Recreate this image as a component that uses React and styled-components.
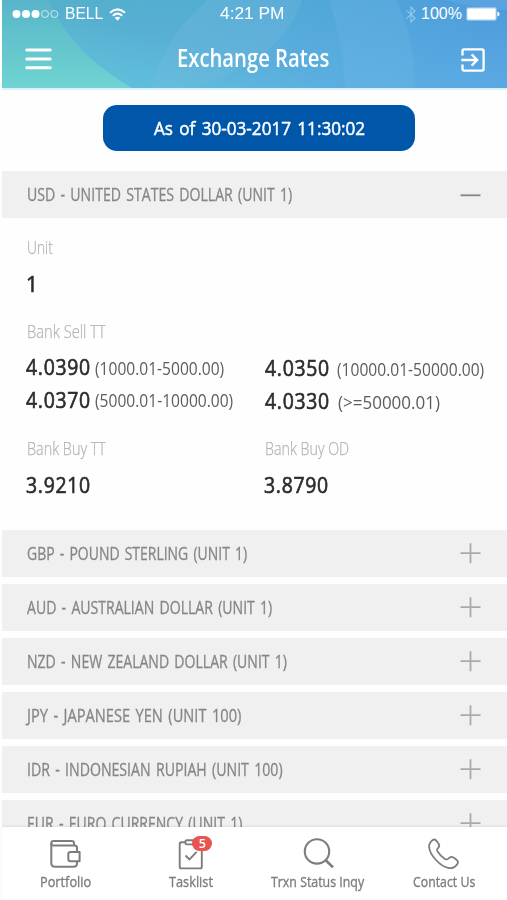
import React, { useLayoutEffect, useRef, useState } from "react";
import styled, { createGlobalStyle } from "styled-components";

const GlobalStyle = createGlobalStyle`
  * {
    box-sizing: border-box;
  }

  body {
    margin: 0;
    background: #ffffff;
    font-family: "Open Sans", "Noto Sans", sans-serif;
  }
`;

const Screen = styled.div`
  width: 507px;
  height: 900px;
  padding-left: 2px;
  display: flex;
  flex-direction: column;
  overflow: hidden;
  background: #fefefe;
`;

const Header = styled.header`
  position: relative;
  flex: none;
  height: 90px;
  color: #ffffff;
  border-bottom: 2px solid #d9f1fb;
`;

const HeaderArt = styled.svg`
  position: absolute;
  top: 0;
  left: 0;
  width: 100%;
  height: 88px;
`;

const StatusBar = styled.div`
  position: relative;
  height: 28px;
  padding: 0 7px 0 10px;
  display: grid;
  grid-template-columns: 208px 1fr auto;
  align-items: center;
  font-family: "Liberation Sans", Arial, sans-serif;
  font-size: 16px;
  line-height: 28px;
`;

const StatusGroup = styled.div`
  display: flex;
  align-items: center;
  gap: ${(props) => props.$gap}px;
`;

const TitleBar = styled.div`
  position: relative;
  height: 60px;
  padding: 1px 22px 0 23px;
  display: flex;
  align-items: center;
  justify-content: space-between;
`;

const Title = styled.h1`
  margin: 0 7px 1px 0;
  font-size: 24.5px;
  font-weight: 600;
  line-height: 34px;
`;

const Content = styled.main`
  flex: 1;
  min-height: 0;
  overflow: hidden;
`;

const DatePill = styled.div`
  width: 312px;
  height: 46px;
  margin: 15px 0 20px 100.5px;
  padding-left: 1px;
  display: flex;
  align-items: center;
  justify-content: center;
  border-radius: 14px;
  background: #0057a9;
  color: #ffffff;
  font-size: 18px;
  word-spacing: 2px;
  -webkit-text-stroke: 0.5px;
`;

const Row = styled.div`
  height: 47px;
  margin-bottom: ${(props) => (props.$open ? 0 : "7.1px")};
  padding: 0 26px 0 25px;
  display: flex;
  align-items: center;
  justify-content: space-between;
  background: #f0f0f0;
  color: #868686;
  font-size: 17.5px;
  line-height: 23px;
  word-spacing: 2px;
  -webkit-text-stroke: 0.3px;
`;

const Details = styled.div`
  height: 312px;
  padding: 17px 0 0 24px;
  display: flex;
  flex-direction: column;
  gap: 20px;
`;

const Columns = styled.div`
  display: grid;
  grid-template-columns: 238px 1fr;
`;

const Label = styled.div`
  height: 24px;
  margin-bottom: ${(props) => (props.$tight ? "8px" : "10px")};
  padding-left: 1px;
  color: #b4b4b4;
  font-size: 17.5px;
  font-weight: 300;
  line-height: 24px;
  -webkit-text-stroke: 0.25px;
`;

const Value = styled.div`
  color: #2c2c2c;
  font-size: 21.5px;
  line-height: 30px;
  letter-spacing: 0.8px;
  -webkit-text-stroke: 0.65px;
`;

const Rate = styled.div`
  height: 32.5px;
  display: flex;
  align-items: center;
  gap: ${(props) => props.$gap}px;
  padding: ${(props) => props.$drop || 0}px 0 0 ${(props) => props.$inset || 0}px;
`;

const Range = styled.span`
  padding-top: 1px;
  color: #5c5c5c;
  font-size: 17.5px;
  line-height: 24px;
`;

const TabBar = styled.nav`
  position: relative;
  flex: none;
  height: 73px;
  padding-top: 11px;
  display: grid;
  grid-template-columns: repeat(4, 1fr);
  background: #ffffff;
  box-shadow: 0 -1px 2px rgba(0, 0, 0, 0.08);
`;

const Tab = styled.div`
  display: flex;
  flex-direction: column;
  align-items: center;
  gap: 3px;
  color: #7d7d7d;
  font-size: 14.5px;
  line-height: 18px;
`;

const TabName = styled.span`
  -webkit-text-stroke: 0.35px;
`;

const TabIcon = styled.div`
  position: relative;
  width: 32px;
  height: 32px;
`;

const Badge = styled.span`
  position: absolute;
  top: -2px;
  left: 17px;
  width: 20px;
  height: 15px;
  border-radius: 8px;
  background: #ea5450;
  color: #ffffff;
  font-size: 12.5px;
  font-weight: 600;
  line-height: 15px;
  text-align: center;
`;

const FitBox = styled.span`
  display: inline-block;
  flex: none;
  white-space: nowrap;
`;

const FitText = styled.span`
  display: inline-block;
  transform-origin: left center;
`;

// Condenses a line of text to the given width.
function Fit({ width, children }) {
  const ref = useRef(null);
  const [scale, setScale] = useState(1);

  useLayoutEffect(() => {
    setScale(width / ref.current.offsetWidth);
  }, [width, children]);

  return (
    <FitBox style={{ width }}>
      <FitText ref={ref} style={{ transform: `scaleX(${scale})` }}>
        {children}
      </FitText>
    </FitBox>
  );
}

const SignalIcon = () => (
  <svg width="47" height="10" viewBox="0 0 47 10">
    <g fill="#fff">
      <circle cx="4.5" cy="5" r="4" />
      <circle cx="14" cy="5" r="4" />
      <circle cx="23.5" cy="5" r="4" />
    </g>
    <g fill="none" stroke="#fff" strokeWidth="0.8" opacity="0.85">
      <circle cx="33" cy="5" r="3.5" />
      <circle cx="42.3" cy="5" r="3.5" />
    </g>
  </svg>
);

const WifiIcon = () => (
  <svg width="17" height="13" viewBox="0 0 17 13">
    <g fill="none" stroke="#fff" strokeWidth="2">
      <path d="M1 4.8 Q8.5 -2 16 4.8" />
      <path d="M3.8 7.7 Q8.5 3.6 13.2 7.7" />
    </g>
    <path d="M5.8 9.8 Q8.5 7.6 11.2 9.8 L8.5 12.7 Z" fill="#fff" />
  </svg>
);

const BluetoothIcon = () => (
  <svg width="10" height="17" viewBox="0 0 10 17" opacity="0.4">
    <path
      d="M0.8 4.6 L9 12 L5 16 V1 L9 5 L0.8 12.4"
      fill="none"
      stroke="#fff"
      strokeWidth="1.1"
    />
  </svg>
);

const BatteryIcon = () => (
  <svg width="34" height="14" viewBox="0 0 34 14">
    <rect x="0.4" y="0.4" width="30.2" height="13.2" rx="2" fill="none" stroke="#fff" strokeWidth="0.7" opacity="0.5" />
    <rect x="1.2" y="1.2" width="28.6" height="11.6" rx="1" fill="#fff" />
    <path d="M31.4 4.5 Q33.6 5 33.6 7 Q33.6 9 31.4 9.5 Z" fill="#fff" />
  </svg>
);

const MenuIcon = () => (
  <svg width="27" height="22" viewBox="0 0 27 22">
    <path d="M1.8 1.9 H25.2 M1.8 10.9 H25.2 M1.8 19.7 H25.2" stroke="#fff" strokeWidth="3" strokeLinecap="round" />
  </svg>
);

const ExitIcon = () => (
  <svg width="24" height="26" viewBox="0 -2 24 26">
    <g fill="none" stroke="#fff" strokeWidth="2.3">
      <path d="M1.5 7.5 V3 Q1.5 1.4 3 1.4 H21 Q22.6 1.4 22.6 3 V21 Q22.6 22.6 21 22.6 H3 Q1.5 22.6 1.5 21 V16.5" />
      <path d="M0.3 12 H16 M10.6 6.4 L16.2 12 L10.6 17.6" />
    </g>
  </svg>
);

const ToggleIcon = ({ open }) => (
  <svg width="21" height="21" viewBox="0 0 21 21">
    {open ? (
      <path d="M0.5 11.3 H20.5" stroke="#858585" strokeWidth="1.8" />
    ) : (
      <path d="M0.5 10.2 H20.5 M10.5 0.2 V20.2" stroke="#aaaaaa" strokeWidth="1.8" />
    )}
  </svg>
);

const WalletIcon = () => (
  <svg width="32" height="32" viewBox="0 0 32 32" fill="none" stroke="currentColor" strokeWidth="2" strokeLinejoin="round">
    <path d="M28 13.5 V10 Q28 7.8 26 7.6 H4.5 Q2.3 7.4 2.3 5.2 Q2.3 3 4.8 3 H22.5 Q25 3 25 5 V7.5" />
    <path d="M2.3 5.2 V25 Q2.3 28.7 6 28.7 H24.5 Q28 28.7 28 25.2 V23.2" />
    <path d="M30.6 14 H21.5 Q19.3 14 19.3 16.2 V21 Q19.3 23.2 21.5 23.2 H30.6 Z" />
  </svg>
);

const TaskIcon = () => (
  <svg width="32" height="32" viewBox="0 0 32 32" fill="none" stroke="currentColor" strokeWidth="1.9" strokeLinejoin="round">
    <path d="M10.5 4.3 H6.3 Q4.7 4.3 4.7 5.9 V28.7 Q4.7 30.4 6.3 30.4 H25.2 Q26.8 30.4 26.8 28.7 V6 Q26.8 4.3 25.2 4.3 H20.5" />
    <path d="M11.8 2.2 H19.2 Q20.6 2.2 20.6 3.6 V5 Q20.6 6.4 19.2 6.4 H11.8 Q10.4 6.4 10.4 5 V3.6 Q10.4 2.2 11.8 2.2 Z" />
    <path d="M10.5 17.5 L14.5 21.5 L21.6 13.8" strokeLinejoin="miter" />
  </svg>
);

const SearchIcon = () => (
  <svg width="32" height="32" viewBox="0 0 32 32" fill="none" stroke="currentColor" strokeWidth="2.1">
    <circle cx="15" cy="13.4" r="12.2" />
    <path d="M23.5 22 L31 29.4" strokeWidth="2.6" />
  </svg>
);

const PhoneIcon = () => (
  <svg width="32" height="32" viewBox="0 0 32 32" fill="none" stroke="currentColor" strokeWidth="1.8" strokeLinejoin="round">
    <path d="M2.5 4.2 Q5.2 0.8 7.3 1.7 Q9.6 3.6 11.2 7 Q11.6 8.6 9.9 10.1 Q8.6 11.4 9.4 13.2 Q12.4 18 17 21 Q18.8 22 20.4 20.6 L21.8 19.4 Q23.3 18.3 25 19.2 Q28 20.8 29.6 23 Q30.6 24.8 28.9 26.6 Q25.8 30.6 20.9 30.1 Q14 28.7 8 22 Q1.6 15.3 1.1 9 Q0.9 6.2 2.5 4.2 Z" />
  </svg>
);

const currencies = [
  { name: "GBP - POUND STERLING (UNIT 1)", width: 220 },
  { name: "AUD - AUSTRALIAN DOLLAR (UNIT 1)", width: 245 },
  { name: "NZD - NEW ZEALAND DOLLAR (UNIT 1)", width: 260 },
  { name: "JPY - JAPANESE YEN (UNIT 100)", width: 214 },
  { name: "IDR - INDONESIAN RUPIAH (UNIT 100)", width: 256 },
  { name: "EUR - EURO CURRENCY (UNIT 1)", width: 215 },
];

const tabs = [
  { name: "Portfolio", width: 51, icon: WalletIcon },
  { name: "Tasklist", width: 44, icon: TaskIcon, badge: 5 },
  { name: "Trxn Status Inqy", width: 93, icon: SearchIcon },
  { name: "Contact Us", width: 62, icon: PhoneIcon },
];

function TopBar() {
  return (
    <Header>
      <HeaderArt viewBox="0 0 505 88" preserveAspectRatio="none">
        <defs>
          <linearGradient id="sky" x1="0" y1="0" x2="1" y2="0">
            <stop offset="0" stopColor="#55b0c9" />
            <stop offset="0.4" stopColor="#53add2" />
            <stop offset="0.7" stopColor="#50a5d9" />
            <stop offset="1" stopColor="#4c9adc" />
          </linearGradient>
          <linearGradient id="mint" x1="0" y1="88" x2="22" y2="0" gradientUnits="userSpaceOnUse">
            <stop offset="0" stopColor="#62cad9" stopOpacity="0.8" />
            <stop offset="1" stopColor="#62cbd8" stopOpacity="0" />
          </linearGradient>
          <linearGradient id="glow" x1="0" y1="0" x2="0" y2="1">
            <stop offset="0" stopColor="#68b7ea" stopOpacity="0" />
            <stop offset="1" stopColor="#68b7ea" stopOpacity="0.5" />
          </linearGradient>
          <linearGradient id="fade" x1="0" y1="0" x2="1" y2="0">
            <stop offset="0.35" stopColor="#fff" />
            <stop offset="0.85" stopColor="#000" />
          </linearGradient>
          <mask id="fadeRight">
            <rect width="505" height="88" fill="url(#fade)" />
          </mask>
          <linearGradient id="leaf" x1="0" y1="0" x2="0" y2="1">
            <stop offset="0" stopColor="#58b5c9" />
            <stop offset="1" stopColor="#6fd4d2" />
          </linearGradient>
        </defs>
        <rect width="505" height="88" fill="url(#sky)" />
        <rect width="505" height="88" fill="url(#glow)" />
        <rect width="505" height="88" fill="url(#mint)" mask="url(#fadeRight)" />
        <path d="M0 0 H47 Q68 52 130 88 H0 Z" fill="url(#leaf)" />
        <path d="M205 0 H300 Q282 60 190 88 H150 Q160 40 205 0 Z" fill="#7cbbe0" opacity="0.25" />
        <path d="M327 0 H394 Q414 42 413 88 H343 Q340 40 327 0 Z" fill="#72bde3" opacity="0.25" />
        <path d="M443 0 H505 V10 Q475 9 443 0 Z" fill="#76b4e8" opacity="0.3" />
      </HeaderArt>
      <StatusBar>
        <StatusGroup $gap={6}>
          <SignalIcon />
          <Fit width={38}>BELL</Fit>
          <WifiIcon />
        </StatusGroup>
        <Fit width={65}>4:21 PM</Fit>
        <StatusGroup $gap={5}>
          <BluetoothIcon />
          <StatusGroup $gap={4}>
            <Fit width={41}>100%</Fit>
            <BatteryIcon />
          </StatusGroup>
        </StatusGroup>
      </StatusBar>
      <TitleBar>
        <MenuIcon />
        <Title>
          <Fit width={152}>Exchange Rates</Fit>
        </Title>
        <ExitIcon />
      </TitleBar>
    </Header>
  );
}

function RateLine({ value, range, width, gap, drop, inset }) {
  return (
    <Rate $gap={gap} $drop={drop} $inset={inset}>
      <Value>
        <Fit width={65}>{value}</Fit>
      </Value>
      <Range>
        <Fit width={width}>{range}</Fit>
      </Range>
    </Rate>
  );
}

function RateDetails() {
  return (
    <Details>
      <div>
        <Label>
          <Fit width={26}>Unit</Fit>
        </Label>
        <Value>
          <Fit width={12.5}>1</Fit>
        </Value>
      </div>
      <div>
        <Label $tight>
          <Fit width={79}>Bank Sell TT</Fit>
        </Label>
        <Columns>
          <div>
            <RateLine value="4.0390" range="(1000.01-5000.00)" width={129} gap={4} />
            <RateLine value="4.0370" range="(5000.01-10000.00)" width={138} gap={4} />
          </div>
          <div>
            <RateLine value="4.0350" range="(10000.01-50000.00)" width={147} gap={7} drop={2} inset={1} />
            <RateLine value="4.0330" range="(>=50000.01)" width={102} gap={7.5} drop={3} inset={1} />
          </div>
        </Columns>
      </div>
      <Columns>
        <div>
          <Label>
            <Fit width={79}>Bank Buy TT</Fit>
          </Label>
          <Value>
            <Fit width={65}>3.9210</Fit>
          </Value>
        </div>
        <div>
          <Label>
            <Fit width={84}>Bank Buy OD</Fit>
          </Label>
          <Value>
            <Fit width={65}>3.8790</Fit>
          </Value>
        </div>
      </Columns>
    </Details>
  );
}

function App() {
  return (
    <Screen>
      <GlobalStyle />
      <TopBar />
      <Content>
        <DatePill>
          <Fit width={211}>As of 30-03-2017 11:30:02</Fit>
        </DatePill>
        <Row $open>
          <Fit width={265}>USD - UNITED STATES DOLLAR (UNIT 1)</Fit>
          <ToggleIcon open />
        </Row>
        <RateDetails />
        {currencies.map((currency) => (
          <Row key={currency.name}>
            <Fit width={currency.width}>{currency.name}</Fit>
            <ToggleIcon />
          </Row>
        ))}
      </Content>
      <TabBar>
        {tabs.map(({ name, width, icon: Icon, badge }) => (
          <Tab key={name}>
            <TabIcon>
              <Icon />
              {badge && <Badge>{badge}</Badge>}
            </TabIcon>
            <TabName>
              <Fit width={width}>{name}</Fit>
            </TabName>
          </Tab>
        ))}
      </TabBar>
    </Screen>
  );
}

export default App;
